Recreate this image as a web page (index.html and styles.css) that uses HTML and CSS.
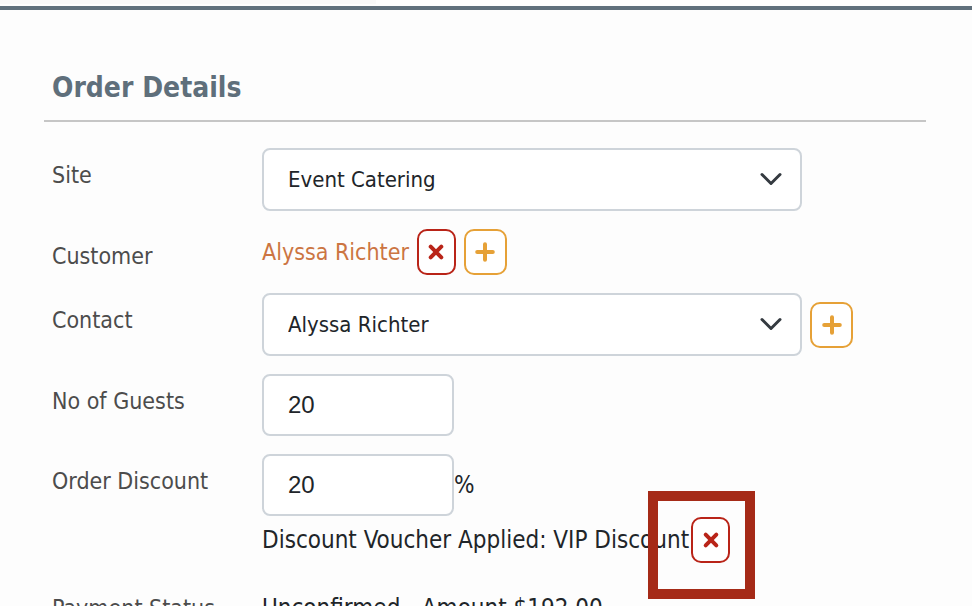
FILE: index.html
```
<!DOCTYPE html>
<html lang="en">
<head>
  <meta charset="UTF-8">
  <title>Order Details</title>
  <meta name="viewport" content="width=device-width, initial-scale=1.0">
  <link rel="stylesheet" href="styles.css">
</head>
<body>
  <div class="top-bar"><div class="top-tab"></div></div>

  <form class="order-form">
    <h2>Order Details</h2>

    <div class="form-row">
      <label for="site">Site</label>
      <div class="field">
        <div class="select-box">
          <select id="site">
            <option>Event Catering</option>
          </select>
          <svg class="chevron" viewBox="0 0 24 16"><path d="M3 3.500l9 9l9-9"/></svg>
        </div>
      </div>
    </div>

    <div class="form-row">
      <span class="label">Customer</span>
      <div class="field">
        <a href="#">Alyssa Richter</a>
        <button type="button" class="btn btn-remove" aria-label="Remove customer">
          <svg viewBox="0 0 20 20"><path d="M4.700 4.700l10.600 10.600M15.300 4.700l-10.600 10.600"/></svg>
        </button>
        <button type="button" class="btn btn-add" aria-label="Add customer">
          <svg viewBox="0 0 20 20"><path d="M10 2.200v15.600M2.200 10h15.600"/></svg>
        </button>
      </div>
    </div>

    <div class="form-row">
      <label for="contact">Contact</label>
      <div class="field">
        <div class="select-box">
          <select id="contact">
            <option>Alyssa Richter</option>
          </select>
          <svg class="chevron" viewBox="0 0 24 16"><path d="M3 3.500l9 9l9-9"/></svg>
        </div>
        <button type="button" class="btn btn-add" aria-label="Add contact">
          <svg viewBox="0 0 20 20"><path d="M10 2.200v15.600M2.200 10h15.600"/></svg>
        </button>
      </div>
    </div>

    <div class="form-row">
      <label for="guests">No of Guests</label>
      <div class="field">
        <input type="text" id="guests" value="20">
      </div>
    </div>

    <div class="form-row">
      <label for="discount">Order Discount</label>
      <div class="value">
        <div class="field percent">
          <input type="text" id="discount" value="20">
          <span>%</span>
        </div>
        <div class="field voucher">
          <span>Discount Voucher Applied: VIP Discount</span>
          <div class="highlight">
            <button type="button" class="btn btn-remove" aria-label="Remove voucher">
              <svg viewBox="0 0 20 20"><path d="M4.700 4.700l10.600 10.600M15.300 4.700l-10.600 10.600"/></svg>
            </button>
          </div>
        </div>
      </div>
    </div>

    <div class="form-row">
      <span class="label">Payment Status</span>
      <span class="value value-text">Unconfirmed - Amount $192.00</span>
    </div>
  </form>
</body>
</html>
```

FILE: styles.css
```
* {
  box-sizing: border-box;
}
body {
  font-family: Tahoma, "DejaVu Sans Condensed", "DejaVu Sans", sans-serif;
  font-size: 23px;
  line-height: 36px;
  color: #212529;
  background-color: #fdfdfd;
  margin: 0;
  height: 100vh;
  overflow: hidden;
}
.top-bar {
  height: 10px;
  border-bottom: 4px solid #5f6f7b;
}
.top-tab {
  width: 376px;
  height: 4px;
  background-color: #f8f8f8;
}
.order-form {
  padding: 60px 46px 0 44px;
}
h2 {
  margin: 0 0 26px;
  padding: 0 8px 14px;
  border-bottom: 2px solid #c6c6c6;
  color: #5f6f7b;
  font-size: 28px;
  line-height: 36px;
}
.form-row {
  display: grid;
  grid-template-columns: 210px 1fr;
  padding: 0 8px;
  margin-bottom: 18px;
}
label, .label, .value-text {
  padding-top: 9px;
}
label, .label {
  color: #4c4c4c;
}
.value {
  font-size: 24px;
}
.field {
  display: flex;
  align-items: center;
  gap: 8px;
}
.percent {
  align-items: baseline;
  gap: 0;
}
.voucher {
  gap: 2px;
  margin-top: 1px;
}
.select-box {
  position: relative;
  flex: 0 1 540px;
}
select, input {
  padding: 0 24px;
  border: 2px solid #ced4da;
  border-radius: 8px;
  background-color: #fff;
  color: #212529;
}
select {
  appearance: none;
  display: block;
  width: 100%;
  height: 63px;
  font: inherit;
  font-size: 22px;
}
input {
  width: 192px;
  height: 62px;
  font-family: Arial, "Liberation Sans", sans-serif;
  font-size: 24px;
}
.chevron {
  position: absolute;
  top: 23px;
  right: 19px;
  width: 24px;
  height: 16px;
  fill: none;
  stroke: #343a40;
  stroke-width: 3;
  stroke-linecap: round;
  stroke-linejoin: round;
  pointer-events: none;
}
a {
  color: #cc7542;
  text-decoration: none;
}
.btn {
  display: flex;
  align-items: center;
  justify-content: center;
  flex-shrink: 0;
  height: 46px;
  padding: 0;
  border: 2px solid;
  border-radius: 10px;
  background-color: #fff;
  cursor: pointer;
}
.btn svg {
  width: 20px;
  height: 20px;
  fill: none;
  stroke: currentColor;
  stroke-width: 4;
  stroke-linecap: round;
}
.btn-remove {
  width: 39px;
  color: #b92418;
}
.btn-add {
  width: 43px;
  color: #e6a137;
}
.highlight {
  position: relative;
}
.highlight::after {
  content: "";
  position: absolute;
  inset: -26px -25px -36px -43px;
  border: 10px solid #a52a17;
  pointer-events: none;
}
```
